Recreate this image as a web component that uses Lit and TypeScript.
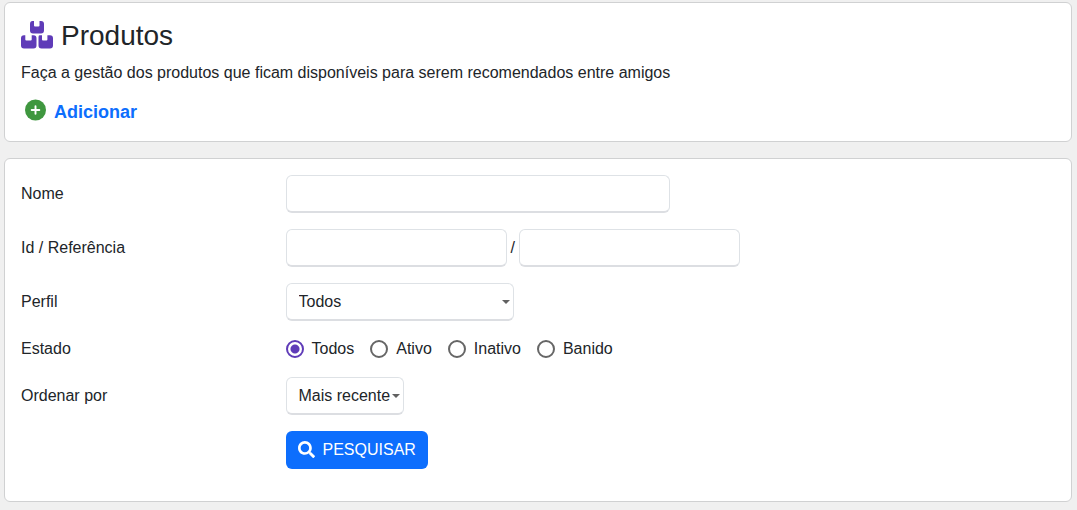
import { LitElement, html, css } from "lit";
import { customElement, state } from "lit/decorators.js";

const ESTADOS = ["Todos", "Ativo", "Inativo", "Banido"];

@customElement("app-root")
export class AppRoot extends LitElement {
  static styles = css`
    :host {
      display: block;
      box-sizing: border-box;
      min-height: 100vh;
      padding: 2px 5px 8px 4px;
      background: #f0f0f0;
      color: #212529;
      font: 16px/24px "Liberation Sans", Arial, sans-serif;
    }
    * {
      box-sizing: border-box;
    }
    .card {
      padding: 16px;
      background: #fff;
      border: 1px solid #d0d1d2;
      border-radius: 6px;
    }
    .card + .card {
      margin-top: 16px;
    }
    .title {
      display: flex;
      align-items: center;
      gap: 8px;
      margin: 0 0 8px;
      font-size: 28px;
      font-weight: 400;
      line-height: 34px;
    }
    .boxes {
      width: 32px;
      height: 28px;
      margin-bottom: 2px;
      fill: #5f3bb8;
    }
    .text {
      margin: 0;
    }
    .actions {
      display: flex;
      padding: 14px 4px 0;
    }
    .add {
      display: inline-flex;
      align-items: center;
      gap: 8px;
      color: #0d6efd;
      font-size: 18px;
      font-weight: 700;
      line-height: 22px;
      text-decoration: none;
    }
    .plus {
      width: 21px;
      height: 22px;
      margin-bottom: 4px;
    }
    .form {
      display: flex;
      flex-direction: column;
      gap: 16px;
      padding-bottom: 16px;
    }
    .row {
      display: grid;
      grid-template-columns: 1fr 3fr;
      align-items: center;
      margin: 0 -12px;
    }
    .label,
    .field {
      padding: 0 12px;
    }
    .field {
      display: flex;
      align-items: center;
      gap: 4px;
      grid-column: 2;
      min-width: 0;
    }
    .control {
      height: 38px;
      margin: 0;
      padding: 0 12px;
      background: #fff;
      border: 1px solid #dee2e6;
      border-bottom: 2px solid #dcdee2;
      border-radius: 6px;
      color: inherit;
      font: inherit;
    }
    .wide {
      width: 50%;
    }
    .code {
      width: 221px;
    }
    .select {
      appearance: none;
      background: #fff
        url("data:image/svg+xml,%3Csvg xmlns='http://www.w3.org/2000/svg' width='8' height='4'%3E%3Cpath d='M0 0h8L4 4z' fill='%23616161'/%3E%3C/svg%3E")
        no-repeat right 3px center;
    }
    .profile {
      width: 228px;
    }
    .order {
      width: 118px;
    }
    .options {
      gap: 16px;
    }
    .option {
      display: flex;
      align-items: center;
      gap: 8px;
    }
    .radio {
      appearance: none;
      width: 18px;
      height: 18px;
      margin: 0;
      border: 2px solid #666;
      border-radius: 50%;
    }
    .radio:checked {
      border-color: #5f3bb8;
      background: radial-gradient(circle, #5f3bb8 4px, transparent 5px);
    }
    .submit {
      display: inline-flex;
      align-items: center;
      gap: 8px;
      height: 38px;
      padding: 0 12px;
      border: 0;
      border-radius: 6px;
      background: #0d6efd;
      color: #fff;
      font: inherit;
    }
    .search {
      width: 17px;
      height: 17px;
      margin-bottom: 2px;
      fill: currentColor;
    }
  `;

  @state() private estado = "Todos";

  render() {
    return html`
      <header class="card">
        <h1 class="title">
          <svg class="boxes" viewBox="0 0 32 28" aria-hidden="true">
            <path d="M11.500 0H13v4.500q0 1 1 1h3.500q1 0 1-1V0H20q3 0 3 3v6.500q0 3-3 3h-8q-3 0-3-3V3q0-3 2.500-3z" />
            <path d="M3 14.200h1.300v4.300q0 1 1 1h4.400q1 0 1-1v-4.300H12.500q3 0 3 3v7.300q0 3-3 3H3q-3 0-3-3v-7.300q0-3 3-3z" />
            <path d="M18.500 14.200h2.500v4.300q0 1 1 1h3.400q1 0 1-1v-4.300H29q3 0 3 3v7.300q0 3-3 3h-8.500q-3 0-3-3v-8.300q0-2 1-2z" />
          </svg>
          Produtos
        </h1>
        <p class="text">Faça a gestão dos produtos que ficam disponíveis para serem recomendados entre amigos</p>
        <div class="actions">
          <a class="add" href="#adicionar">
            <svg class="plus" viewBox="0 0 22 22" aria-hidden="true">
              <circle cx="11" cy="11" r="11" fill="#3f973f" />
              <path d="M11 7v8M7 11h8" stroke="#fff" stroke-width="2" stroke-linecap="round" />
            </svg>
            Adicionar
          </a>
        </div>
      </header>

      <main class="card">
        <form class="form" @submit=${(e: Event) => e.preventDefault()}>
          <div class="row">
            <label class="label" for="nome">Nome</label>
            <div class="field"><input class="control wide" id="nome" type="text" /></div>
          </div>
          <div class="row">
            <label class="label" for="id">Id / Referência</label>
            <div class="field">
              <input class="control code" id="id" type="text" />
              <span>/</span>
              <input class="control code" id="referencia" type="text" aria-label="Referência" />
            </div>
          </div>
          <div class="row">
            <label class="label" for="perfil">Perfil</label>
            <div class="field">
              <select class="control select profile" id="perfil"><option>Todos</option></select>
            </div>
          </div>
          <div class="row" role="radiogroup" aria-labelledby="estado">
            <span class="label" id="estado">Estado</span>
            <div class="field options">
              ${ESTADOS.map(
                (nome) => html`
                  <label class="option">
                    <input
                      class="radio"
                      type="radio"
                      name="estado"
                      .value=${nome}
                      .checked=${nome === this.estado}
                      @change=${() => (this.estado = nome)}
                    />${nome}
                  </label>
                `
              )}
            </div>
          </div>
          <div class="row">
            <label class="label" for="ordem">Ordenar por</label>
            <div class="field">
              <select class="control select order" id="ordem"><option>Mais recente</option></select>
            </div>
          </div>
          <div class="row">
            <div class="field">
              <button class="submit" type="submit">
                <svg class="search" viewBox="0 0 512 512" aria-hidden="true">
                  <path d="M505 442.700L405.300 343c-4.500-4.500-10.600-7-17-7H372c27.600-35.300 44-79.700 44-128C416 93.100 322.900 0 208 0S0 93.100 0 208s93.100 208 208 208c48.300 0 92.700-16.400 128-44v16.300c0 6.400 2.500 12.500 7 17l99.700 99.700c9.400 9.400 24.600 9.400 33.900 0l28.300-28.300c9.400-9.400 9.400-24.600.1-34zM208 336c-70.700 0-128-57.200-128-128 0-70.700 57.200-128 128-128 70.700 0 128 57.200 128 128 0 70.700-57.200 128-128 128z" />
                </svg>
                PESQUISAR
              </button>
            </div>
          </div>
        </form>
      </main>
    `;
  }
}
